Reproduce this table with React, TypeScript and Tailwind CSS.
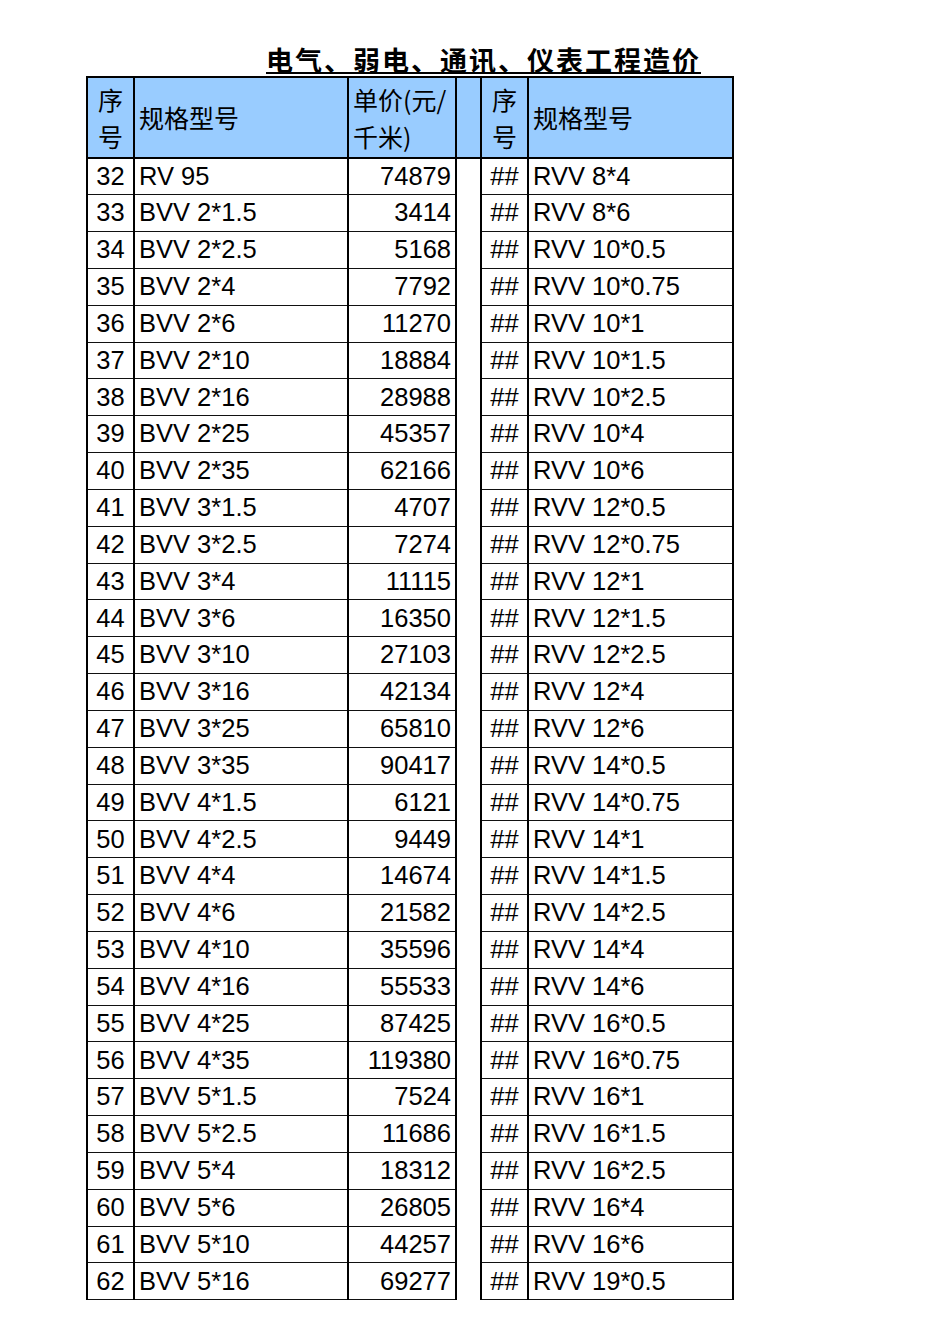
import React from "react";

const left: [string, string, string][] = [
  ["32", "RV 95", "74879"],
  ["33", "BVV 2*1.5", "3414"],
  ["34", "BVV 2*2.5", "5168"],
  ["35", "BVV 2*4", "7792"],
  ["36", "BVV 2*6", "11270"],
  ["37", "BVV 2*10", "18884"],
  ["38", "BVV 2*16", "28988"],
  ["39", "BVV 2*25", "45357"],
  ["40", "BVV 2*35", "62166"],
  ["41", "BVV 3*1.5", "4707"],
  ["42", "BVV 3*2.5", "7274"],
  ["43", "BVV 3*4", "11115"],
  ["44", "BVV 3*6", "16350"],
  ["45", "BVV 3*10", "27103"],
  ["46", "BVV 3*16", "42134"],
  ["47", "BVV 3*25", "65810"],
  ["48", "BVV 3*35", "90417"],
  ["49", "BVV 4*1.5", "6121"],
  ["50", "BVV 4*2.5", "9449"],
  ["51", "BVV 4*4", "14674"],
  ["52", "BVV 4*6", "21582"],
  ["53", "BVV 4*10", "35596"],
  ["54", "BVV 4*16", "55533"],
  ["55", "BVV 4*25", "87425"],
  ["56", "BVV 4*35", "119380"],
  ["57", "BVV 5*1.5", "7524"],
  ["58", "BVV 5*2.5", "11686"],
  ["59", "BVV 5*4", "18312"],
  ["60", "BVV 5*6", "26805"],
  ["61", "BVV 5*10", "44257"],
  ["62", "BVV 5*16", "69277"],
];

const right = [
  "RVV 8*4", "RVV 8*6", "RVV 10*0.5", "RVV 10*0.75", "RVV 10*1", "RVV 10*1.5",
  "RVV 10*2.5", "RVV 10*4", "RVV 10*6", "RVV 12*0.5", "RVV 12*0.75", "RVV 12*1",
  "RVV 12*1.5", "RVV 12*2.5", "RVV 12*4", "RVV 12*6", "RVV 14*0.5", "RVV 14*0.75",
  "RVV 14*1", "RVV 14*1.5", "RVV 14*2.5", "RVV 14*4", "RVV 14*6", "RVV 16*0.5",
  "RVV 16*0.75", "RVV 16*1", "RVV 16*1.5", "RVV 16*2.5", "RVV 16*4", "RVV 16*6",
  "RVV 19*0.5",
];

const head = "border-2 border-black px-[4px] py-0 font-normal leading-[37px]";
const body = "border-x-2 border-y-[1.5px] border-x-black border-y-[#111] px-[4px] py-0 leading-none";

const App = () => {
  return (
    <div className="min-h-[1344px] w-[950px] bg-white pt-[44px] text-black [font-family:'Liberation_Sans','Noto_Sans_CJK_SC',sans-serif]">
      <div className="pl-[266px] text-[27px] font-bold leading-[32px] tracking-[2px] underline decoration-2 underline-offset-[1px] [font-family:'Noto_Sans_CJK_SC',sans-serif]">
        电气、弱电、通讯、仪表工程造价
      </div>
      <table className="ml-[86px] table-fixed border-collapse text-[25.5px]">
        <colgroup>
          <col className="w-[47px]" />
          <col className="w-[214px]" />
          <col className="w-[108px]" />
          <col className="w-[25px]" />
          <col className="w-[47px]" />
          <col className="w-[205px]" />
        </colgroup>
        <thead>
          <tr className="h-[81px] bg-[#99ccff] align-middle text-[25px] [font-family:'Noto_Sans_CJK_SC',sans-serif]">
            <th className={`${head} text-center`}>
              序<br />号
            </th>
            <th className={`${head} text-left`}>规格型号</th>
            <th className={`${head} whitespace-nowrap text-left`}>
              单价(元/
              <br />
              千米)
            </th>
            <th className={head}></th>
            <th className={`${head} text-center`}>
              序<br />号
            </th>
            <th className={`${head} text-left`}>规格型号</th>
          </tr>
        </thead>
        <tbody>
          {left.map((r, i) => (
            <tr key={r[0]} className="h-[36.84px]">
              <td className={`${body} text-center`}>{r[0]}</td>
              <td className={`${body} text-left`}>{r[1]}</td>
              <td className={`${body} text-right`}>{r[2]}</td>
              <td className="border-x-2 border-y-0 border-black p-0"></td>
              <td className={`${body} text-center`}>##</td>
              <td className={`${body} text-left`}>{right[i]}</td>
            </tr>
          ))}
        </tbody>
      </table>
    </div>
  );
};

export default App;
